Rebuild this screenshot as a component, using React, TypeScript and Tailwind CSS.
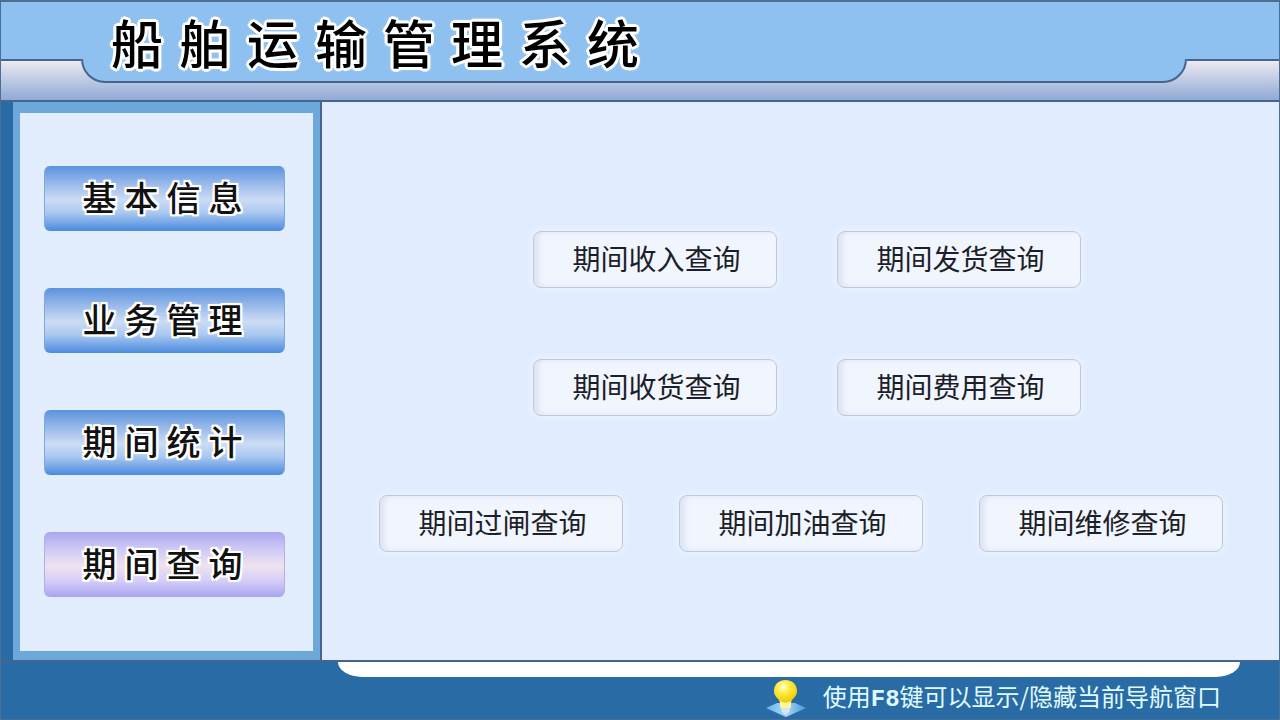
const menus = [
  { name: '基本信息', active: false },
  { name: '业务管理', active: false },
  { name: '期间统计', active: false },
  { name: '期间查询', active: true },
];

function MenuButton({ name, active }: { name: string; active: boolean }) {
  const bg = active
    ? 'bg-[linear-gradient(to_bottom,#a9a6ee_0%,#c9c4f6_22%,#efe3ee_52%,#d5cdf8_75%,#a8a5f0_100%)] border-[#b3aee8]'
    : 'bg-[linear-gradient(to_bottom,#5a93dc_0%,#8db2e8_22%,#cddcf4_52%,#a9c8f0_72%,#4a8ade_100%)] border-[#7fa9de]';
  return (
    <button
      type="button"
      className={`h-[65px] w-full rounded-md border-x pb-1 pl-1 text-center text-[34px] leading-none font-medium tracking-[8px] text-[#111] [text-shadow:2px_0_#fff,-2px_0_#fff,0_2px_#fff,0_-2px_#fff,2px_2px_#fff,-2px_2px_#fff,2px_-2px_#fff,-2px_-2px_#fff,0_0_4px_#fff] ${bg}`}
    >
      {name}
    </button>
  );
}

function QueryButton({ name }: { name: string }) {
  return (
    <button
      type="button"
      className="h-[57px] w-61 rounded-lg border border-[#bfc6e0] bg-[#f1f5fd] pb-1 pl-1 text-[28px] leading-none text-[#1c1f28] shadow-[inset_5px_0_5px_#dfe5f5,0_0_6px_#f3f6fe]"
    >
      {name}
    </button>
  );
}

function Bulb() {
  return (
    <svg width="42" height="38" viewBox="0 0 42 38" aria-hidden="true">
      <defs>
        <radialGradient id="glass" cx="40%" cy="30%" r="70%">
          <stop offset="0" stopColor="#fffde0" />
          <stop offset="0.35" stopColor="#fff04a" />
          <stop offset="1" stopColor="#f0c800" />
        </radialGradient>
        <linearGradient id="base" x1="0" y1="0" x2="1" y2="0">
          <stop offset="0" stopColor="#6db4ea" />
          <stop offset="0.5" stopColor="#a5d8f8" />
          <stop offset="1" stopColor="#4c98d8" />
        </linearGradient>
      </defs>
      <path d="M1 29 L12 24 H30 L41 29 L21 38 Z" fill="url(#base)" />
      <path
        d="M20.500 1 C13 1 9 6 9 12 C9 18 14 19 15 24 H26 C27 19 32 18 32 12 C32 6 28 1 20.500 1 Z"
        fill="url(#glass)"
      />
      <path d="M15 22 Q20.500 25 26 22 V28 L24 31 H17 L15 28 Z" fill="#fbf5a0" />
      <path d="M16 29 H25 L24 33 L20.500 36 L17 33 Z" fill="#d5e6f2" />
    </svg>
  );
}

export default function App() {
  return (
    <div className="flex min-h-screen flex-col border border-t-2 border-[#4b6e95] bg-[#296ba4] font-['Noto_Sans_CJK_SC',sans-serif]">
      <header className="border-b-2 border-[#46658e]">
        <div className="h-[57px] bg-[#8fc1f0] pt-3 pl-[110px]">
          <h1 className="relative text-[52px] leading-[56px] font-medium tracking-[16px] whitespace-nowrap text-black [text-shadow:3px_0_#fff,-3px_0_#fff,0_3px_#fff,0_-3px_#fff,2px_2px_#fff,-2px_2px_#fff,2px_-2px_#fff,-2px_-2px_#fff,0_0_4px_#fff]">
            船舶运输管理系统
          </h1>
        </div>
        <div className="flex h-[41px] items-start bg-linear-to-b from-[#f1ecf3] to-[#91aad4]">
          <div className="w-20 border-t-2 border-[#46658e]" />
          <div className="h-6 flex-1 rounded-b-3xl border-x-2 border-b-2 border-[#46658e] bg-[#8fc1f0]" />
          <div className="w-[92px] border-t-2 border-[#46658e]" />
        </div>
      </header>

      <div className="flex flex-1 border-b-2 border-[#46658e]">
        <nav className="ml-3 w-[309px] shrink-0 border-r-2 border-[#46658e] bg-[#6da8da] px-[7px] pt-[11px] pb-[9px]">
          <div className="flex h-full flex-col gap-[57px] bg-[#e2edfe] pt-[53px] pr-7 pb-13 pl-6">
            {menus.map((m) => (
              <MenuButton key={m.name} name={m.name} active={m.active} />
            ))}
          </div>
        </nav>

        <main className="flex flex-1 flex-col items-center bg-[#e1edfe] pt-[129px]">
          <div className="flex gap-15 pl-3">
            <QueryButton name="期间收入查询" />
            <QueryButton name="期间发货查询" />
          </div>
          <div className="mt-[71px] flex gap-15 pl-3">
            <QueryButton name="期间收货查询" />
            <QueryButton name="期间费用查询" />
          </div>
          <div className="mt-[79px] flex gap-14">
            <QueryButton name="期间过闸查询" />
            <QueryButton name="期间加油查询" />
            <QueryButton name="期间维修查询" />
          </div>
        </main>
      </div>

      <footer>
        <div className="mr-[39px] ml-[337px] h-[15px] rounded-b-[24px_15px] bg-white" />
        <div className="flex h-[42px] items-center justify-end gap-4 pr-[58px]">
          <Bulb />
          <p className="text-2xl leading-none whitespace-nowrap text-[#e0fbff]">
            使用<b className="font-['Liberation_Mono',monospace]">F8</b>键可以显示/隐藏当前导航窗口
          </p>
        </div>
      </footer>
    </div>
  );
}
